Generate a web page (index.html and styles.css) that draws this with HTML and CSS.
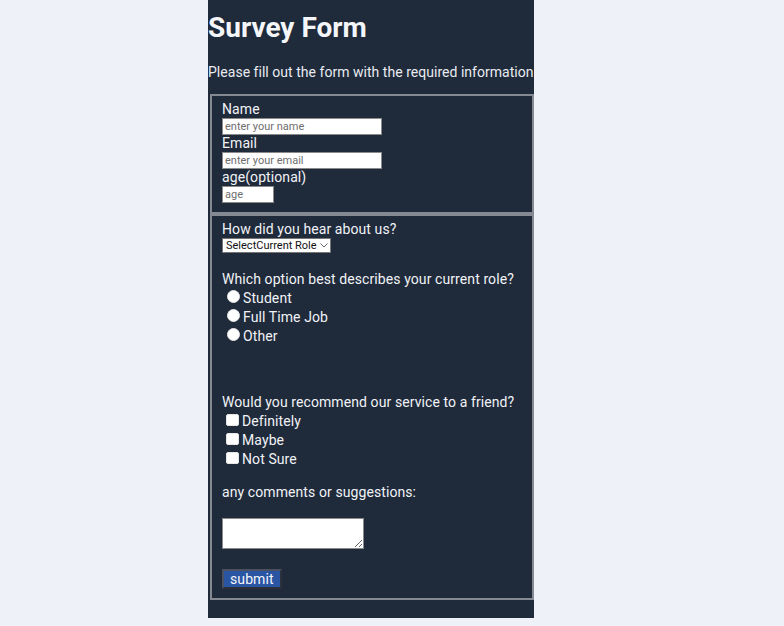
FILE: index.html
```html
<!DOCTYPE html>
<html lang="en">
<head>
<meta charset="utf-8">
<title>Survey Form</title>
<link rel="stylesheet" href="styles.css">
</head>
<body>
<main class="survey">
  <h1 class="title">Survey Form</h1>
  <p class="intro">Please fill out the form with the required information</p>
  <form class="form">
    <fieldset class="group group-top">
      <label class="field-label" for="name">Name</label>
      <input class="text-input" id="name" type="text" placeholder="enter your name">
      <label class="field-label" for="email">Email</label>
      <input class="text-input" id="email" type="email" placeholder="enter your email">
      <label class="field-label" for="age">age(optional)</label>
      <input class="text-input age-input" id="age" type="number" placeholder="age">
    </fieldset>
    <fieldset class="group group-bottom">
      <label class="field-label" for="source">How did you hear about us?</label>
      <span class="select-wrap">
        <select class="select" id="source"><option>SelectCurrent Role</option></select>
        <svg class="chevron" width="8" height="5" viewBox="0 0 8 5" aria-hidden="true"><path d="M0.5 0.5 L4 4 L7.5 0.5" fill="none" stroke="#555" stroke-width="0.9"/></svg>
      </span>
      <p class="question q-role">Which option best describes your current role?</p>
      <label class="option"><input class="radio" type="radio" name="role">Student</label>
      <label class="option"><input class="radio" type="radio" name="role">Full Time Job</label>
      <label class="option"><input class="radio" type="radio" name="role">Other</label>
      <p class="question q-recommend">Would you recommend our service to a friend?</p>
      <label class="option"><input class="check" type="checkbox">Definitely</label>
      <label class="option"><input class="check" type="checkbox">Maybe</label>
      <label class="option"><input class="check" type="checkbox">Not Sure</label>
      <p class="question q-comments">any comments or suggestions:</p>
      <textarea class="comments"></textarea>
      <div class="actions"><button class="submit" type="submit">submit</button></div>
    </fieldset>
  </form>
</main>
</body>
</html>
```

FILE: styles.css
```css
html, body {
  margin: 0;
  padding: 0;
}
body {
  background: #eef2f8;
  font-family: Roboto, "Liberation Sans", sans-serif;
  font-size: 14px;
  line-height: normal;
  letter-spacing: 0.09px;
  color: #f1f3f6;
}
.survey {
  width: 326px;
  height: 618px;
  margin: 0 0 0 208px;
  padding: 11px 0 0;
  background: #1f2a3b;
  box-sizing: border-box;
}
.title {
  margin: 0;
  font-size: 28px;
  font-weight: 700;
  line-height: normal;
  letter-spacing: 0;
  color: #f4f6f9;
}
.intro {
  margin: 20px 0 14px;
  white-space: nowrap;
  letter-spacing: 0.03px;
  color: #e9ecf1;
}
.form {
  margin: 0;
}
.group {
  margin: 0 0 0 2px;
  padding: 5px 10px 9px;
  border: 2px solid #858a92;
  min-width: 0;
}
.field-label {
  display: block;
}
.text-input {
  display: block;
  box-sizing: border-box;
  width: 160px;
  height: 17px;
  margin: 1px 0 0;
  padding: 1px 2px;
  border: 1px solid #8a8a8a;
  background: #fff;
  font-family: Roboto, "Liberation Sans", sans-serif;
  font-size: 11px;
  letter-spacing: 0;
  color: #222;
}
.text-input::placeholder {
  color: #6f6f6f;
}
.age-input {
  width: 52px;
  -moz-appearance: textfield;
}
.age-input::-webkit-inner-spin-button,
.age-input::-webkit-outer-spin-button {
  -webkit-appearance: none;
  margin: 0;
}
.select-wrap {
  position: relative;
  display: block;
  width: 109px;
  margin: 1px 0 0;
}
.select {
  display: block;
  -webkit-appearance: none;
  appearance: none;
  box-sizing: border-box;
  width: 109px;
  height: 15px;
  margin: 0;
  padding: 0 12px 0 3px;
  border: 1px solid #767676;
  border-radius: 0;
  background: #fff;
  font-family: Roboto, "Liberation Sans", sans-serif;
  font-size: 11px;
  line-height: 13px;
  letter-spacing: 0;
  color: #111;
}
.chevron {
  position: absolute;
  right: 3px;
  top: 5px;
  pointer-events: none;
}
.question {
  margin: 0;
}
.q-role {
  margin-top: 18px;
}
.q-recommend {
  margin-top: 50px;
}
.q-comments {
  margin-top: 17px;
}
.option {
  display: block;
}
.radio,
.check {
  -webkit-appearance: none;
  appearance: none;
  box-sizing: border-box;
  width: 13px;
  height: 13px;
  margin: 3px 3px 0 5px;
  border: 1px solid #e6e6e6;
  background: #fff;
  vertical-align: baseline;
}
.radio {
  border-radius: 50%;
}
.check {
  width: 13px;
  height: 12px;
  margin: 4px 3px 0 4px;
  border-radius: 2px;
  vertical-align: baseline;
}
.comments {
  display: block;
  box-sizing: border-box;
  width: 142px;
  height: 31px;
  margin: 18px 0 0;
  border: 1px solid #8a8a8a;
  background: #fff;
  resize: vertical;
}
.actions {
  margin-top: 20px;
  line-height: 0;
}
.submit {
  box-sizing: border-box;
  height: 20px;
  padding: 0 6px;
  background: #2a55a3;
  color: #f4f6fb;
  border: 2px solid #3a4250;
  border-color: #4a5261 #2b313b #2b313b #4a5261;
  font-family: Roboto, "Liberation Sans", sans-serif;
  font-size: 14px;
  line-height: 16px;
  letter-spacing: 0.1px;
}
```
